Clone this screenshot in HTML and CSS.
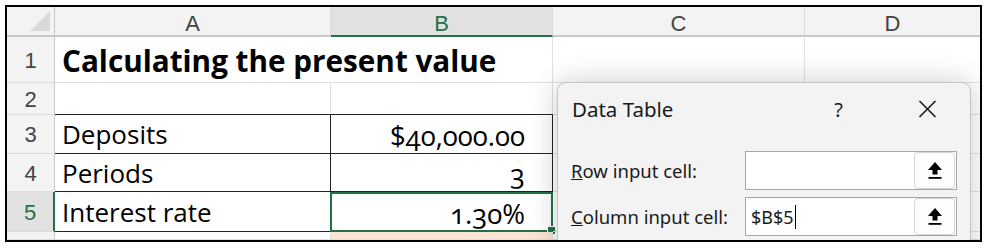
FILE: index.html
```html
<!DOCTYPE html>
<html lang="en">
<head>
    <meta charset="UTF-8">
    <title>Data Table</title>
    <link rel="stylesheet" href="styles.css">
</head>
<body>
    <div class="frame">
        <div class="sheet">
            <div class="corner"><span class="tri"></span></div>
            <div class="col-head">A</div>
            <div class="col-head active">B</div>
            <div class="col-head">C</div>
            <div class="col-head last">D</div>

            <div class="row-head">1</div>
            <div class="cell title-cell">Calculating the present value</div>
            <div class="cell"></div>
            <div class="cell"></div>
            <div class="cell last"></div>

            <div class="row-head">2</div>
            <div class="cell"></div>
            <div class="cell"></div>
            <div class="cell"></div>
            <div class="cell last"></div>

            <div class="row-head">3</div>
            <div class="cell boxed first-row">Deposits</div>
            <div class="cell boxed first-row num">$40,000.00</div>
            <div class="cell"></div>
            <div class="cell last"></div>

            <div class="row-head">4</div>
            <div class="cell boxed">Periods</div>
            <div class="cell boxed num">3</div>
            <div class="cell"></div>
            <div class="cell last"></div>

            <div class="row-head active">5</div>
            <div class="cell boxed">Interest rate</div>
            <div class="cell boxed num selected">1.30%<span class="handle"></span></div>
            <div class="cell"></div>
            <div class="cell last"></div>

            <div class="row-head"></div>
            <div class="cell"></div>
            <div class="cell peach"></div>
            <div class="cell"></div>
            <div class="cell last"></div>
        </div>

        <div class="dialog">
            <div class="dialog-bar">
                <span class="dialog-title">Data Table</span>
                <span class="help">?</span>
                <svg class="close" width="19" height="18" viewBox="0 0 19 18">
                    <path d="M1.5 1 L17.5 17 M17.5 1 L1.5 17" stroke="#1a1a1a" stroke-width="1.6" fill="none"/>
                </svg>
            </div>
            <div class="fields">
                <div class="field">
                    <label><u>R</u>ow input cell:</label>
                    <div class="input">
                        <span class="value"></span>
                        <span class="pick">
                            <svg width="16" height="19" viewBox="0 0 16 19"><path d="M8 1 L15 9 H10.5 V13.5 H5.5 V9 H1 Z" fill="#000"/><rect x="1.5" y="16" width="13" height="1.8" fill="#000"/></svg>
                        </span>
                    </div>
                </div>
                <div class="field">
                    <label><u>C</u>olumn input cell:</label>
                    <div class="input">
                        <span class="value">$B$5<span class="caret"></span></span>
                        <span class="pick">
                            <svg width="16" height="19" viewBox="0 0 16 19"><path d="M8 1 L15 9 H10.5 V13.5 H5.5 V9 H1 Z" fill="#000"/><rect x="1.5" y="16" width="13" height="1.8" fill="#000"/></svg>
                        </span>
                    </div>
                </div>
            </div>
        </div>
    </div>
</body>
</html>
```

FILE: styles.css
```css
body {
    margin: 0;
    background-color: #fff;
    font-family: "Open Sans", "Noto Sans", sans-serif;
}

.frame {
    position: relative;
    margin: 5px 0 0 5px;
    width: 973px;
    height: 233px;
    border: 2px solid #000;
    overflow: hidden;
}

.sheet {
    display: grid;
    grid-template-columns: 48px 276px 222px 252px 175px;
    grid-template-rows: 30px 46px 32px 39px 38px 40px 8px;
}

.sheet > div {
    box-sizing: border-box;
}

.corner {
    position: relative;
    background-color: #f3f3f3;
    border-right: 1px solid #c8c8c8;
    border-bottom: 2px solid #c8c8c8;
}
.corner .tri {
    position: absolute;
    right: 4px;
    bottom: 4px;
    width: 0;
    height: 0;
    border-left: 20px solid transparent;
    border-bottom: 20px solid #dadada;
}

.col-head {
    background-color: #f3f3f3;
    border-right: 1px solid #dcdcdc;
    border-bottom: 2px solid #c8c8c8;
    text-align: center;
    font-family: "Liberation Sans", Arial, sans-serif;
    font-size: 22px;
    line-height: 33px;
    color: #444;
}
.col-head.active {
    background-color: #e1e1e1;
    color: #217346;
    border-bottom: 2px solid #217346;
}
.col-head.last {
    border-right: none;
}

.row-head {
    background-color: #f3f3f3;
    border-right: 1px solid #c8c8c8;
    border-bottom: 1px solid #dcdcdc;
    font-family: "Liberation Sans", Arial, sans-serif;
    font-size: 22px;
    color: #444;
    display: flex;
    align-items: center;
    justify-content: center;
    padding-top: 2px;
}
.row-head.active {
    background-color: #e1e1e1;
    color: #217346;
    border-right: 2px solid #217346;
}

.cell {
    position: relative;
    border-right: 1px solid #e1e1e1;
    border-bottom: 1px solid #e1e1e1;
    font-family: "Open Sans", sans-serif;
    font-size: 26px;
    color: #000;
    padding: 0 7px;
    display: flex;
    align-items: center;
    line-height: 32px;
}
.cell.last {
    border-right: none;
}
.title-cell {
    font-weight: bold;
    font-size: 29.7px;
    white-space: nowrap;
    line-height: 44px;
    border-right: none;
    padding-top: 2px;
}

.cell.boxed {
    border-right: 1px solid #222;
    border-bottom: 1px solid #222;
}
.cell.boxed.first-row {
    border-top: 1px solid #222;
    margin-top: -1px;
}
.cell.num {
    justify-content: flex-end;
    padding-right: 27px;
    font-variant-numeric: oldstyle-nums;
    font-family: "Open Sans", sans-serif;
    font-size: 27.5px;
    padding-top: 3px;
}
.cell.selected {
    border: 2px solid #217346;
    margin-left: -1px;
    padding-right: 26px;
}
.cell.selected .handle {
    position: absolute;
    right: -5px;
    bottom: -5px;
    width: 7px;
    height: 7px;
    background-color: #217346;
    border: 1px solid #fff;
}
.cell.peach {
    background-color: #fbe4d5;
}

.dialog {
    position: absolute;
    left: 550px;
    top: 75px;
    width: 412px;
    height: 200px;
    background-color: #f3f3f3;
    border: 1px solid #c4c4c4;
    border-radius: 9px;
    box-shadow: 0 0 30px rgba(0, 0, 0, 0.2);
    font-family: "Noto Sans", sans-serif;
    color: #1a1a1a;
}

.dialog-bar {
    display: flex;
    align-items: center;
    height: 52px;
    padding: 0 33px 0 14px;
}
.dialog-title {
    font-size: 20.5px;
    flex: 1;
}
.help {
    font-size: 20px;
    margin-right: 75px;
}

.fields {
    display: flex;
    flex-direction: column;
    gap: 7px;
    padding: 16px 13px 0 13px;
}
.field {
    display: flex;
    align-items: center;
    justify-content: space-between;
}
.field label {
    font-size: 18.5px;
}
.input {
    display: flex;
    align-items: center;
    justify-content: space-between;
    box-sizing: border-box;
    width: 212px;
    height: 39px;
    background-color: #fff;
    border: 1px solid #a6a6a6;
    padding: 0 1px 0 5px;
}
.input .value {
    font-size: 18px;
    display: flex;
    align-items: center;
}
.caret {
    display: inline-block;
    width: 1px;
    height: 24px;
    background-color: #000;
    margin-left: 1px;
}
.pick {
    display: flex;
    align-items: center;
    justify-content: center;
    width: 39px;
    height: 35px;
    background-color: #fdfdfd;
    border: 1px solid #d4d4d4;
    border-radius: 4px;
}
```
